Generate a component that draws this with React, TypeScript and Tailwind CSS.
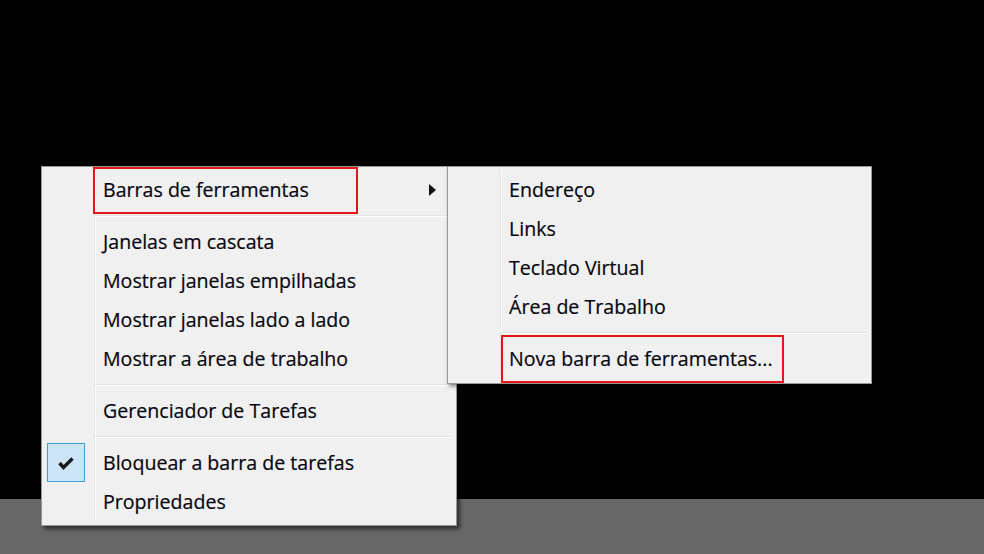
import type { ReactNode } from 'react'

const font = { fontFamily: '"Open Sans", "Noto Sans", sans-serif' }

function Row({ children, left }: { children?: ReactNode; left?: ReactNode }) {
  return (
    <div className="flex h-[39px]">
      <div className="w-[52px] shrink-0 flex items-center">{left}</div>
      <div className="flex-1 flex items-center border-l border-[#e2e3e3] shadow-[inset_1px_0_0_#ffffff] pl-[8px] pt-[1px] text-[19.6px] text-[#06060f] leading-none [-webkit-text-stroke:0.2px_#06060f]">
        {children}
      </div>
    </div>
  )
}

function Sep() {
  return (
    <div className="flex h-[13px]">
      <div className="w-[52px] shrink-0" />
      <div className="flex-1 flex items-center border-l border-[#e2e3e3] shadow-[inset_1px_0_0_#ffffff] pr-[4px]">
        <div className="w-full h-[2px] bg-[#e2e3e3] border-b border-white" />
      </div>
    </div>
  )
}

function Check() {
  return (
    <div className="ml-[5px] w-[38px] h-[39px] bg-[#cce4f7] border border-[#3c9fd8] flex items-center justify-center">
      <svg width="16" height="14" viewBox="0 0 16 14">
        <path d="M1.5 7 L5.5 11.5 L14.5 2.5" fill="none" stroke="#1a1a1a" strokeWidth="3.4" strokeLinejoin="miter" />
      </svg>
    </div>
  )
}

export default function App() {
  return (
    <div className="w-[984px] h-[554px] bg-black flex flex-col relative overflow-hidden" style={font}>
      <div className="flex-1" />
      <div className="h-[55px] bg-[#676767]" />

      {/* main context menu */}
      <div className="absolute left-[41px] top-[166px] w-[416px] bg-[#f0f0f0] border border-[#979797] pt-[3px] pb-[4px] shadow-[3px_3px_4px_rgba(0,0,0,0.55)]">
        <Row>
          <div className="flex-1 flex items-center justify-between pr-[20px]">
            <span>Barras de ferramentas</span>
            <svg width="7" height="12" viewBox="0 0 7 12" className="-mt-[1px]">
              <path d="M0 0 L7 6 L0 12 Z" fill="#111" />
            </svg>
          </div>
        </Row>
        <Sep />
        <Row>Janelas em cascata</Row>
        <Row>Mostrar janelas empilhadas</Row>
        <Row>Mostrar janelas lado a lado</Row>
        <Row>Mostrar a área de trabalho</Row>
        <Sep />
        <Row>Gerenciador de Tarefas</Row>
        <Sep />
        <Row left={<Check />}>Bloquear a barra de tarefas</Row>
        <Row>Propriedades</Row>
        <div className="absolute left-[51px] top-[0px] w-[265px] h-[47px] border-2 border-[#e4141c]" />
      </div>

      {/* toolbars submenu */}
      <div className="absolute left-[447px] top-[166px] w-[425px] bg-[#f0f0f0] border border-[#979797] pt-[3px] pb-[5px] shadow-[2px_2px_4px_rgba(0,0,0,0.5)]">
        <Row>Endereço</Row>
        <Row>Links</Row>
        <Row>Teclado Virtual</Row>
        <Row>Área de Trabalho</Row>
        <Sep />
        <Row>Nova barra de ferramentas...</Row>
        <div className="absolute left-[53px] top-[168px] w-[283px] h-[48px] border-2 border-[#e4141c]" />
      </div>
    </div>
  )
}
